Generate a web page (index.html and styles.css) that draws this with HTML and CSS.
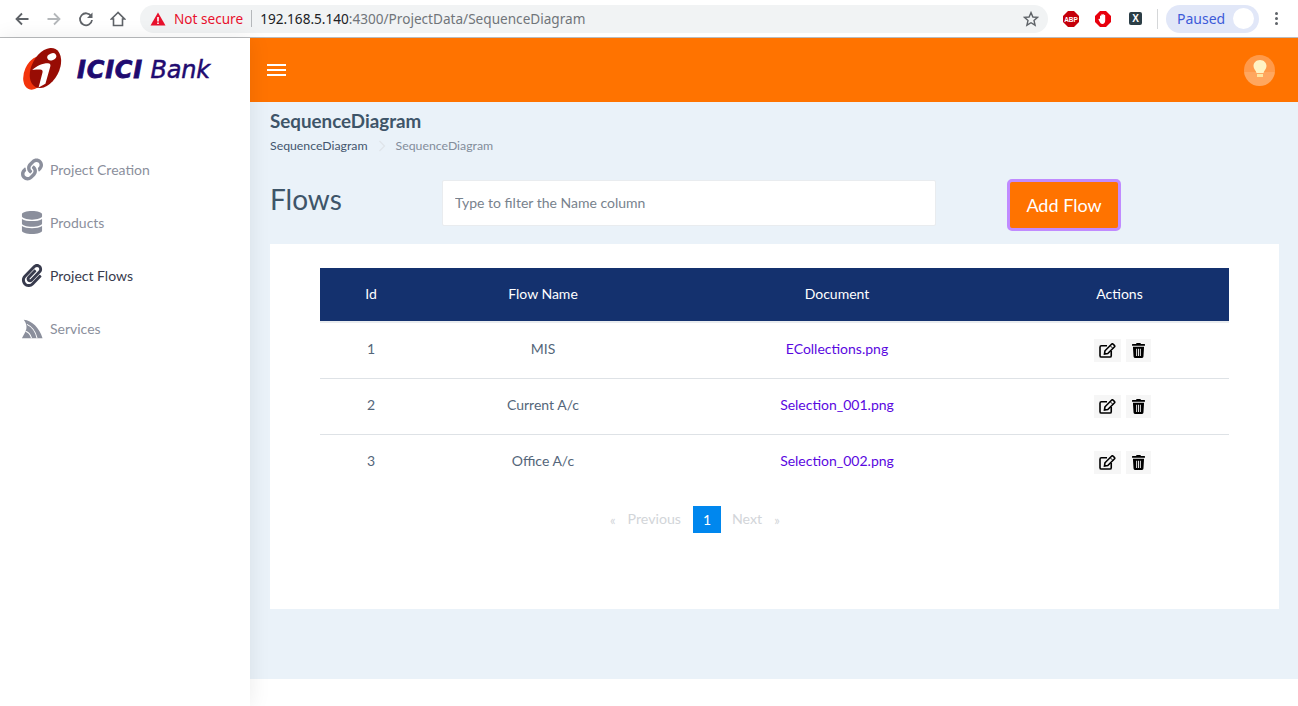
FILE: index.html
```html
<!DOCTYPE html>
<html lang="en">
<head>
    <meta charset="UTF-8">
    <meta name="viewport" content="width=device-width, initial-scale=1.0">
    <title>SequenceDiagram</title>
    <link rel="stylesheet" href="styles.css">
</head>
<body>
    <div class="browser-bar">
        <div class="nav-buttons">
            <svg class="nav-icon" viewBox="0 0 16 16"><path d="M14.5 8H2.5M8 2.5L2.5 8L8 13.5" fill="none" stroke="#5f6368" stroke-width="1.8"/></svg>
            <svg class="nav-icon" viewBox="0 0 16 16"><path d="M1.5 8H13.5M8 2.5L13.5 8L8 13.5" fill="none" stroke="#b4b7ba" stroke-width="1.8"/></svg>
            <svg class="nav-icon" viewBox="0 0 16 16"><path d="M13.2 5.2A6 6 0 1 0 14 9" fill="none" stroke="#5f6368" stroke-width="1.8"/><path d="M14.5 1.5V7H9Z" fill="#5f6368"/></svg>
            <svg class="nav-icon" viewBox="0 0 16 16"><path d="M8 1.5L1.5 8H3.5V14.5H12.5V8H14.5Z" fill="none" stroke="#5f6368" stroke-width="1.6"/></svg>
        </div>
        <div class="omnibox">
            <svg class="warn-icon" viewBox="0 0 16 14"><path d="M8 .5L15.5 13.5H.5Z" fill="#e8112d"/><path d="M7.2 5H8.8V9.5H7.2ZM7.2 10.5H8.8V12H7.2Z" fill="#fff"/></svg>
            <span class="not-secure">Not secure</span>
            <span class="url"><b>192.168.5.140</b>:4300/ProjectData/SequenceDiagram</span>
            <svg class="star-icon" viewBox="0 0 16 16"><path d="M8 1.6L9.9 6L14.6 6.4L11 9.5L12.1 14.2L8 11.7L3.9 14.2L5 9.5L1.4 6.4L6.1 6Z" fill="none" stroke="#5f6368" stroke-width="1.4"/></svg>
        </div>
        <div class="extensions">
            <svg class="ext-icon" viewBox="0 0 16 16"><path d="M5 0H11L16 5V11L11 16H5L0 11V5Z" fill="#c5000b"/><text x="8" y="10.6" class="abp-text">ABP</text></svg>
            <svg class="ext-icon" viewBox="0 0 16 16"><path d="M5 0H11L16 5V11L11 16H5L0 11V5Z" fill="#e8000d"/><path d="M5 8V5.2C5 4.2 6.2 4.2 6.2 5.2V4C6.2 3 7.5 3 7.5 4V3.6C7.5 2.7 8.8 2.7 8.8 3.6V4.4C8.8 3.5 10.2 3.5 10.2 4.4V9.5C10.2 11.6 9 13 7.4 13C6 13 5.4 12.2 4.8 11L3.6 8.8C3.2 7.9 4.3 7.2 5 8Z" fill="#fff"/></svg>
            <div class="ext-x">X</div>
        </div>
        <div class="bar-divider"></div>
        <div class="paused-pill">
            <span>Paused</span>
            <div class="paused-avatar"></div>
        </div>
        <div class="menu-dots"><i></i><i></i><i></i></div>
    </div>

    <div class="app">
        <aside class="sidebar">
            <div class="logo">
                <svg class="logo-mark" viewBox="0 0 40 43">
                    <ellipse cx="13" cy="25" rx="11.500" ry="18" transform="rotate(24 13 25)" fill="#f3340c"/>
                    <ellipse cx="23" cy="20" rx="14" ry="22" transform="rotate(28 23 20)" fill="#980c04"/>
                    <path d="M9.500 22C14 17.500 20 15 25.500 15C28 15 28.500 16.500 28 18.500L23 36L16 40L20 24.500C20.500 22.500 19.500 21.500 17.500 21.500C15 21.500 12 21.500 9.500 22Z" fill="#fff"/>
                    <ellipse cx="29.500" cy="8.500" rx="4.800" ry="3.500" transform="rotate(-22 29.500 8.500)" fill="#fff"/>
                </svg>
                <div class="logo-text"><b>ICICI</b> Bank</div>
            </div>
            <nav class="side-nav">
                <a class="side-item">
                    <svg class="side-icon" viewBox="0 0 512 512"><path fill="currentColor" d="M326.600 185.400c59.700 59.800 58.900 155.700.4 214.600l-67.200 67.200c-59.300 59.300-155.700 59.300-215 0-59.300-59.300-59.300-155.700 0-215l37.100-37.100c9.800-9.800 26.800-3.300 27.300 10.600.6 17.700 3.800 35.500 9.700 52.700 2 5.800.6 12.300-3.800 16.600l-13.100 13.100c-28 28-28.900 73.700-1.200 102 28 28.500 74 28.700 102.200.5l67.200-67.200c28.200-28.200 28.100-73.800 0-101.800-3.700-3.700-7.400-6.600-10.300-8.600a16 16 0 0 1-6.900-12.600c-.4-10.600 3.300-21.400 11.700-29.800l21-21c5.500-5.500 14.200-6.200 20.600-1.700a152.500 152.500 0 0 1 20.500 17.200zM467.500 44.400c-59.300-59.300-155.700-59.300-215 0l-67.200 67.200c-58.500 59-59.300 154.800.4 214.600a152.500 152.500 0 0 0 20.500 17.200c6.400 4.500 15.100 3.800 20.600-1.700l21-21c8.400-8.400 12.100-19.200 11.700-29.800a16 16 0 0 0-6.900-12.600c-2.900-2-6.600-4.900-10.300-8.600-28.100-28-28.200-73.600 0-101.800l67.200-67.200c28.200-28.200 74.200-28 102.200.5 27.700 28.300 26.800 74-1.200 102l-13.100 13.100c-4.400 4.300-5.800 10.800-3.800 16.600 5.900 17.200 9.100 35 9.700 52.700.5 13.900 17.500 20.400 27.300 10.600l37.100-37.100c59.300-59.300 59.300-155.700 0-215z"/></svg>
                    <span>Project Creation</span>
                </a>
                <a class="side-item">
                    <svg class="side-icon" viewBox="0 0 448 512"><path fill="currentColor" d="M448 73v46c0 40-100 73-224 73S0 159 0 119V73C0 33 100 0 224 0s224 33 224 73zm0 103v103c0 40-100 73-224 73S0 319 0 279V176c48 33 136 48 224 48s176-15 224-48zm0 160v103c0 40-100 73-224 73S0 479 0 439V336c48 33 136 48 224 48s176-15 224-48z"/></svg>
                    <span>Products</span>
                </a>
                <a class="side-item active">
                    <svg class="side-icon" viewBox="0 0 448 512"><path fill="currentColor" d="M43.200 466.300c-58.400-60.300-57.300-157.500 1.400-217.600L254.700 34c44.400-45.400 116.500-45.400 160.900 0 44 45 44 117.700 0 162.600L232.300 383.900c-29.900 30.600-78.600 30.100-107.900-1-28.300-29.900-27.400-77.400 1.400-106.900l144.100-147.200c6.200-6.300 16.300-6.400 22.600-.3l22.900 22.400c6.300 6.200 6.400 16.300.3 22.600L171.500 320.700c-4.900 5.100-5.200 13.500-.5 18.500 4.400 4.700 11.500 4.800 16 .2l183.300-187.300c19.700-20.100 19.700-52.700 0-72.800-19.200-19.700-50.200-19.700-69.500 0L91 293.400c-34.700 35.500-35.200 93-1.200 128.100 33.900 35 88.700 35.100 122.700.3l172.300-176c6.200-6.300 16.300-6.400 22.600-.2l22.900 22.400c6.300 6.200 6.400 16.300.2 22.600L258.300 466.600c-59.700 61-156.200 60.900-215.100-.3z"/></svg>
                    <span>Project Flows</span>
                </a>
                <a class="side-item">
                    <svg class="side-icon" viewBox="0 0 24 24"><path fill="currentColor" d="M3 2.500C12 3.500 20 11 23.500 22.500H1C3 19 5 16 5.800 12.500C6.500 9 5.500 5.500 3 2.500Z"/><path d="M6.500 7.500C12 10 16 16 17.500 22.500M5 15C8 16 10.500 19 11.500 22.500" fill="none" stroke="#fff" stroke-width="1.100"/></svg>
                    <span>Services</span>
                </a>
            </nav>
        </aside>

        <div class="main">
            <header class="topbar">
                <div class="hamburger"><i></i><i></i><i></i></div>
                <div class="bulb">
                    <svg viewBox="0 0 14 20" class="bulb-icon"><path d="M7 0C3 0 .5 3 .5 6C.5 9 3 10.500 3.500 13H10.500C11 10.500 13.500 9 13.500 6C13.500 3 11 0 7 0Z" fill="#fff3c4"/><path d="M4 14H10V17H4Z" fill="#ffe6a0"/></svg>
                </div>
            </header>
            <div class="content">
                <h2 class="page-title">SequenceDiagram</h2>
                <div class="breadcrumb">
                    <span class="crumb-link">SequenceDiagram</span>
                    <svg class="crumb-sep" viewBox="0 0 8 12"><path d="M1.500 1L6.500 6L1.500 11" fill="none" stroke="#dfe4e9" stroke-width="1.200"/></svg>
                    <span>SequenceDiagram</span>
                </div>
                <div class="toolbar">
                    <h1 class="flows-title">Flows</h1>
                    <input class="filter-input" type="text" placeholder="Type to filter the Name column">
                    <button class="add-btn" type="button">Add Flow</button>
                </div>
                <div class="table-card">
                    <table class="flows-table">
                        <thead>
                            <tr><th class="col-id">Id</th><th class="col-name">Flow Name</th><th class="col-doc">Document</th><th>Actions</th></tr>
                        </thead>
                        <tbody>
                            <tr>
                                <td>1</td><td>MIS</td><td><a class="doc-link">ECollections.png</a></td>
                                <td><div class="actions">
                                    <button class="icon-btn icon-edit" type="button"><svg viewBox="0 0 18 16"><use href="#edit-icon"/></svg></button>
                                    <button class="icon-btn icon-trash" type="button"><svg viewBox="0 0 448 512"><use href="#trash-icon"/></svg></button>
                                </div></td>
                            </tr>
                            <tr>
                                <td>2</td><td>Current A/c</td><td><a class="doc-link">Selection_001.png</a></td>
                                <td><div class="actions">
                                    <button class="icon-btn icon-edit" type="button"><svg viewBox="0 0 18 16"><use href="#edit-icon"/></svg></button>
                                    <button class="icon-btn icon-trash" type="button"><svg viewBox="0 0 448 512"><use href="#trash-icon"/></svg></button>
                                </div></td>
                            </tr>
                            <tr>
                                <td>3</td><td>Office A/c</td><td><a class="doc-link">Selection_002.png</a></td>
                                <td><div class="actions">
                                    <button class="icon-btn icon-edit" type="button"><svg viewBox="0 0 18 16"><use href="#edit-icon"/></svg></button>
                                    <button class="icon-btn icon-trash" type="button"><svg viewBox="0 0 448 512"><use href="#trash-icon"/></svg></button>
                                </div></td>
                            </tr>
                        </tbody>
                    </table>
                    <div class="pagination">
                        <span class="page-arrow">«</span>
                        <span class="page-word">Previous</span>
                        <span class="page-num">1</span>
                        <span class="page-word">Next</span>
                        <span class="page-arrow">»</span>
                    </div>
                </div>
            </div>
        </div>
    </div>

    <svg class="icon-defs" width="0" height="0">
        <defs>
            <g id="edit-icon" fill="none" stroke="currentColor" stroke-width="1.700">
                <path d="M8.500 3H2.500C1.500 3 1 3.500 1 4.500V13.500C1 14.500 1.500 15 2.500 15H11.500C12.500 15 13 14.500 13 13.500V8.500"/>
                <path d="M5.800 11.700L6.300 8.300L13.300 1.300C13.800.8 14.600.8 15.100 1.300L16.300 2.500C16.800 3 16.800 3.800 16.300 4.300L9.300 11.300Z"/>
                <path d="M11.800 2.800L14.800 5.800" stroke-width="1"/>
            </g>
            <path id="trash-icon" fill="currentColor" d="M432 32H312l-9.400-18.700A24 24 0 0 0 281.100 0H166.800a23.700 23.700 0 0 0-21.400 13.300L136 32H16A16 16 0 0 0 0 48v32a16 16 0 0 0 16 16h416a16 16 0 0 0 16-16V48a16 16 0 0 0-16-16zM53.200 467a48 48 0 0 0 47.900 45h245.800a48 48 0 0 0 47.900-45L416 128H32zM144 192h32v256h-32zm64 0h32v256h-32zm64 0h32v256h-32z"/>
        </defs>
    </svg>
</body>
</html>
```

FILE: styles.css
```css
* {
    box-sizing: border-box;
}
html, body {
    height: 100%;
}
body {
    margin: 0;
    overflow: hidden;
    font-family: Lato, "Open Sans", sans-serif;
    font-size: 14px;
    color: #54667a;
    background-color: #fff;
}

/* browser toolbar */
.browser-bar {
    display: flex;
    align-items: center;
    height: 38px;
    padding-left: 14px;
    background-color: #fff;
    border-bottom: 1px solid #b9bbbd;
}
.nav-buttons {
    display: flex;
    gap: 16px;
    width: 126px;
}
.nav-icon {
    width: 16px;
    height: 16px;
}
.omnibox {
    display: flex;
    align-items: center;
    width: 908px;
    height: 28px;
    padding: 0 9px 0 10px;
    border-radius: 14px;
    background-color: #f1f3f4;
    font-family: "Noto Sans", sans-serif;
    font-size: 13.600px;
}
.warn-icon {
    width: 16px;
    height: 14px;
    margin-right: 8px;
}
.not-secure {
    padding-right: 8px;
    border-right: 1px solid #b5b8bb;
    color: #e8112d;
    line-height: 17px;
}
.url {
    flex: 1;
    padding-left: 8px;
    color: #70757a;
}
.url b {
    font-weight: normal;
    color: #202124;
}
.star-icon {
    width: 16px;
    height: 16px;
}
.extensions {
    display: flex;
    align-items: center;
    gap: 16px;
    margin-left: 15px;
}
.ext-icon {
    width: 16px;
    height: 16px;
}
.abp-text {
    fill: #fff;
    font-family: "Liberation Sans", sans-serif;
    font-size: 6.500px;
    font-weight: bold;
    text-anchor: middle;
}
.ext-x {
    width: 13px;
    height: 13px;
    margin-left: 2px;
    border-radius: 2px;
    background-color: #2c3e46;
    color: #fff;
    font-family: "Liberation Sans", sans-serif;
    font-size: 10px;
    font-weight: bold;
    line-height: 13px;
    text-align: center;
}
.bar-divider {
    width: 1px;
    height: 20px;
    margin: 0 8px 0 15px;
    background-color: #d5d7d9;
}
.paused-pill {
    display: flex;
    align-items: center;
    justify-content: space-between;
    width: 93px;
    height: 28px;
    padding: 0 5px 0 11px;
    border-radius: 14px;
    background-color: #e1e7f8;
    color: #3d5bd9;
    font-family: "Noto Sans", sans-serif;
    font-size: 14px;
}
.paused-avatar {
    width: 21px;
    height: 21px;
    border-radius: 50%;
    background-color: #fff;
}
.menu-dots {
    display: flex;
    flex-direction: column;
    gap: 2px;
    margin-left: 16px;
}
.menu-dots i {
    width: 3px;
    height: 3px;
    border-radius: 50%;
    background-color: #5f6368;
}

/* app shell */
.app {
    display: flex;
    height: 668px;
}
.sidebar {
    position: relative;
    z-index: 2;
    flex: 0 0 250px;
    background-color: #fff;
    box-shadow: 1px 0 20px rgba(0, 0, 0, 0.08);
}
.logo {
    display: flex;
    height: 105px;
    padding: 10px 0 0 23px;
}
.logo-mark {
    width: 39px;
    height: 43px;
}
.logo-text {
    margin: 10px 0 0 15px;
    color: #1f0b70;
    font-family: "DejaVu Sans", sans-serif;
    font-size: 24px;
    font-style: italic;
    letter-spacing: -0.200px;
    line-height: 24px;
    white-space: nowrap;
    -webkit-text-stroke: 0.500px #1f0b70;
}
.logo-text b {
    font-weight: 700;
    letter-spacing: 0.800px;
    -webkit-text-stroke: 0.800px #1f0b70;
}
.side-item {
    display: flex;
    align-items: center;
    gap: 7px;
    height: 53px;
    padding-left: 21px;
    color: #8b8f9c;
}
.side-item.active {
    color: #383b4d;
}
.side-item span {
    font-size: 14px;
}
.side-icon {
    width: 22px;
    height: 23px;
}

/* top bar */
.main {
    flex: 1;
    display: flex;
    flex-direction: column;
    min-width: 0;
}
.topbar {
    display: flex;
    align-items: center;
    justify-content: space-between;
    flex: 0 0 64px;
    padding: 0 23px 0 17px;
    background-color: #ff7300;
}
.hamburger {
    display: flex;
    flex-direction: column;
    gap: 3px;
}
.hamburger i {
    width: 19px;
    height: 2px;
    background-color: #fff;
}
.bulb {
    display: flex;
    align-items: center;
    justify-content: center;
    width: 31px;
    height: 31px;
    border-radius: 50%;
    background: linear-gradient(#ff9a4a 55%, #ffa75f 55%);
}
.bulb-icon {
    width: 14px;
    height: 20px;
}

/* page content */
.content {
    height: 577px;
    padding: 0 19px 0 20px;
    background-color: #eaf2f9;
}
.page-title {
    margin: 0;
    padding-top: 8px;
    color: #3e5569;
    font-size: 18.800px;
    font-weight: 700;
    line-height: 22px;
}
.breadcrumb {
    display: flex;
    align-items: center;
    gap: 10px;
    margin-top: 5px;
    color: #838d9b;
    font-size: 12.300px;
    line-height: 18px;
}
.crumb-link {
    color: #44566e;
}
.crumb-sep {
    width: 8px;
    height: 12px;
}
.toolbar {
    display: flex;
    align-items: flex-start;
    height: 65px;
    margin-top: 24px;
}
.flows-title {
    flex: 0 0 172px;
    margin: 0;
    color: #3e5569;
    font-size: 28px;
    font-weight: 400;
    line-height: 40px;
}
.filter-input {
    width: 494px;
    height: 46px;
    margin-top: 1px;
    padding: 0 12px 2px;
    border: 1px solid #e9ecef;
    border-radius: 2px;
    background-color: #fff;
    font-family: inherit;
    font-size: 14px;
}
.filter-input::placeholder {
    color: #78828d;
    opacity: 1;
}
.add-btn {
    width: 114px;
    height: 52px;
    margin-left: 71px;
    border: 3px solid #c08bff;
    border-radius: 5px;
    background-color: #ff7300;
    color: #fff;
    font-family: inherit;
    font-size: 18px;
}

/* table card */
.table-card {
    height: 365px;
    padding: 24px 50px 0;
    background-color: #fff;
}
.flows-table {
    width: 100%;
    border-collapse: separate;
    border-spacing: 0;
    table-layout: fixed;
}
.flows-table th {
    height: 55px;
    padding: 0 0 2px;
    background-color: #14316e;
    background-clip: padding-box;
    color: #fff;
    font-weight: 400;
    border-bottom: 2px solid #e9ecef;
}
.col-id {
    width: 102px;
}
.col-name {
    width: 242px;
}
.col-doc {
    width: 346px;
}
.flows-table td {
    height: 56px;
    padding: 0 0 5px;
    text-align: center;
    border-bottom: 1px solid #dee2e6;
}
.flows-table tr:last-child td {
    border-bottom-color: transparent;
}
.doc-link {
    color: #5a08e0;
}
.actions {
    display: flex;
    justify-content: center;
    gap: 5px;
    padding: 5px 0 0 6px;
}
.icon-btn {
    display: flex;
    align-items: center;
    justify-content: center;
    height: 23px;
    padding: 0;
    border: none;
    background-color: #f6f6f6;
    color: #000;
}
.icon-edit {
    width: 27px;
}
.icon-edit svg {
    width: 17px;
    height: 15px;
}
.icon-trash {
    width: 25px;
}
.icon-trash svg {
    width: 13px;
    height: 15px;
}
.pagination {
    display: flex;
    align-items: center;
    margin-top: 15px;
    padding-left: 290px;
    color: #d2d5d9;
}
.page-arrow {
    font-size: 13px;
}
.page-word {
    padding: 0 12px 2px;
    font-size: 14.200px;
}
.page-num {
    width: 28px;
    height: 27px;
    background-color: #0087ee;
    color: #fff;
    line-height: 27px;
    text-align: center;
}
.page-num + .page-word {
    padding-left: 11px;
}
.icon-defs {
    position: absolute;
}
```
